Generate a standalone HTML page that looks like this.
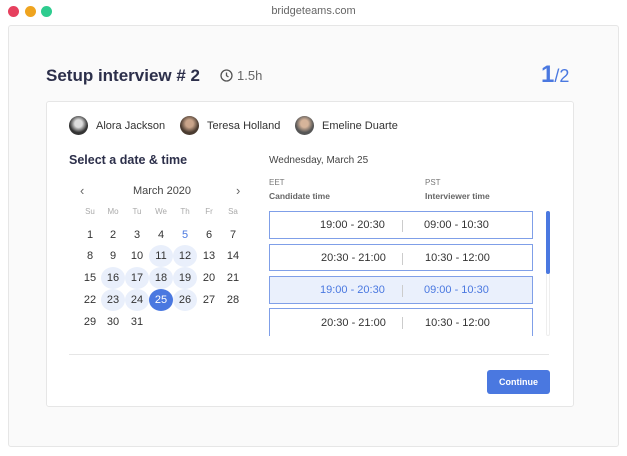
<!DOCTYPE html>
<html><head><style>
*{margin:0;padding:0;box-sizing:border-box}
body{width:627px;height:456px;background:#fff;font-family:"Liberation Sans",sans-serif;position:relative;overflow:hidden;color:#2c2f4a}
.a{position:absolute}
.dot{width:11px;height:11px;border-radius:50%;top:6px}
.day{position:absolute;width:24px;height:22px;line-height:22px;text-align:center;font-size:11px;color:#333;border-radius:50%}
.hl{background:#e9effb}
.sel{background:#4a78e0;color:#fff}
.slot{position:absolute;left:269px;width:264px;border:1px solid #7f9fe8;background:#fff;font-size:11px;color:#333}
.slot span{position:absolute;top:0;height:100%;display:flex;align-items:center}
.slot i{position:absolute;left:132px;top:8px;width:1px;height:12px;background:#ccc}
.av{width:19px;height:19px;border-radius:50%;top:116px}
</style></head><body>
<div class="a dot" style="left:8px;background:#e6405e"></div>
<div class="a dot" style="left:25px;background:#efa41f"></div>
<div class="a dot" style="left:41px;background:#2ecc8f"></div>
<div class="a" style="left:0;width:627px;top:5px;text-align:center;font-size:11px;color:#666">bridgeteams.com</div>
<div class="a" style="left:8px;top:25px;width:611px;height:422px;background:#fafafa;border:1px solid #e6e6e6;border-radius:3px"></div>
<div class="a" style="left:46px;top:66px;font-size:17px;font-weight:bold;color:#2c2f4a">Setup interview # 2</div>
<svg class="a" style="left:220px;top:69px" width="13" height="13" viewBox="0 0 13 13"><circle cx="6.5" cy="6.5" r="5.5" fill="none" stroke="#555" stroke-width="1.3"/><path d="M6.5 3.5v3.2l2 1.3" fill="none" stroke="#555" stroke-width="1.3"/></svg>
<div class="a" style="left:237px;top:68px;font-size:13px;color:#666">1.5h</div>
<div class="a" style="left:541px;top:61px;font-size:24px;color:#4a78e0"><b>1</b><span style="font-size:18px">/2</span></div>
<div class="a" style="left:46px;top:101px;width:528px;height:306px;background:#fff;border:1px solid #e6e6e6;border-radius:3px"></div>
<div class="a av" style="left:69px;background:radial-gradient(circle at 50% 40%,#ddd 25%,#333 60%)"></div>
<div class="a" style="left:96px;top:120px;font-size:11px;color:#333">Alora Jackson</div>
<div class="a av" style="left:180px;background:radial-gradient(circle at 50% 40%,#c9a48a 25%,#4a3b30 60%)"></div>
<div class="a" style="left:207px;top:120px;font-size:11px;color:#333">Teresa Holland</div>
<div class="a av" style="left:295px;background:radial-gradient(circle at 50% 40%,#d6b49a 25%,#555 60%)"></div>
<div class="a" style="left:322px;top:120px;font-size:11px;color:#333">Emeline Duarte</div>
<div class="a" style="left:69px;top:153px;font-size:12.5px;font-weight:bold;color:#2c2f4a">Select a date &amp; time</div>
<div class="a" style="left:80px;top:183px;font-size:13px;color:#666">‹</div>
<div class="a" style="left:236px;top:183px;font-size:13px;color:#666">›</div>
<div class="a" style="left:100px;width:124px;top:185px;text-align:center;font-size:11px;color:#444">March 2020</div>
<div id="cal"></div>
<div class="a" style="left:269px;top:155px;font-size:10px;color:#444">Wednesday, March 25</div>
<div class="a" style="left:269px;top:178px;font-size:8px;color:#777">EET</div>
<div class="a" style="left:269px;top:191px;font-size:8.5px;font-weight:bold;color:#666">Candidate time</div>
<div class="a" style="left:425px;top:178px;font-size:8px;color:#777">PST</div>
<div class="a" style="left:425px;top:191px;font-size:8.5px;font-weight:bold;color:#666">Interviewer time</div>
<div class="slot" style="top:211px;height:28px"><span style="left:50px">19:00 - 20:30</span><i></i><span style="left:154px">09:00 - 10:30</span></div>
<div class="slot" style="top:244px;height:27px"><span style="left:51px">20:30 - 21:00</span><i></i><span style="left:155px">10:30 - 12:00</span></div>
<div class="slot" style="top:276px;height:28px;background:#eaf0fc;color:#4a78e0"><span style="left:50px">19:00 - 20:30</span><i></i><span style="left:154px">09:00 - 10:30</span></div>
<div class="slot" style="top:308px;height:28px;border-bottom:none"><span style="left:51px">20:30 - 21:00</span><i></i><span style="left:155px">10:30 - 12:00</span></div>
<div class="a" style="left:546px;top:211px;width:4px;height:125px;border:1px solid #eee;border-radius:2px"></div>
<div class="a" style="left:546px;top:211px;width:4px;height:63px;background:#4a78e0;border-radius:2px"></div>
<div class="a" style="left:69px;top:354px;width:480px;height:1px;background:#e6e6e6"></div>
<div class="a" style="left:487px;top:370px;width:63px;height:24px;background:#4a78e0;border-radius:3px;color:#fff;font-size:9px;font-weight:bold;text-align:center;line-height:24px">Continue</div>
<script>
var c=document.getElementById('cal'),xs=[90,113,137,161,185,209,233],h='';
['Su','Mo','Tu','We','Th','Fr','Sa'].forEach(function(d,i){h+='<div class="day" style="left:'+(xs[i]-12)+'px;top:201px;font-size:8px;color:#aaa">'+d+'</div>'});
var ys=[235,256,278,300,322];
for(var d=1;d<=31;d++){var i=(d-1)%7,r=Math.floor((d-1)/7);var cl='day';if([11,12,16,17,18,19,23,24,26].indexOf(d)>=0)cl+=' hl';if(d==25)cl+=' sel';var st=d==5?'color:#4a78e0;':'';h+='<div class="'+cl+'" style="'+st+'left:'+(xs[i]-12)+'px;top:'+(ys[r]-11)+'px">'+d+'</div>'}
c.innerHTML=h;
</script>
</body></html>
